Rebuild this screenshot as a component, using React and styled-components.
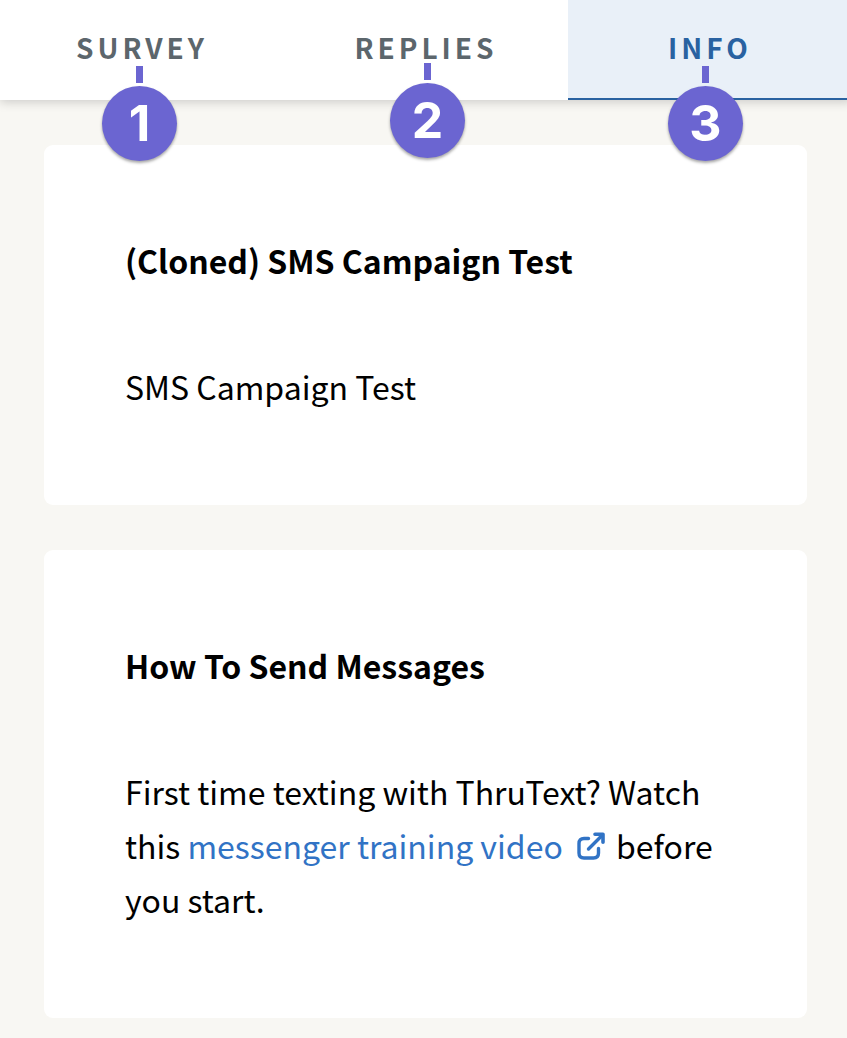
import React from "react";
import styled, { createGlobalStyle } from "styled-components";

const GlobalStyle = createGlobalStyle`
  *, *::before, *::after { box-sizing: border-box; }
  html, body { margin: 0; min-height: 100%; background: #f8f7f3; }
  body {
    overflow-x: hidden;
    color: #000;
    font-family: "Source Sans Pro", "Noto Sans CJK JP", "Noto Sans", sans-serif;
    font-size: 32px;
    line-height: 54px;
  }
`;

const Shell = styled.div`
  width: calc(100% + 5px);
`;

const TabBar = styled.nav`
  display: flex;
  height: 100px;
  background: #fff;
  box-shadow: 0 2px 10px rgba(0, 0, 0, 0.18);
`;

const TabItem = styled.div`
  position: relative;
  flex: 1;
  display: flex;
`;

const Tab = styled.button`
  flex: 1;
  margin: 0;
  padding: 0 0 4px;
  border: 0;
  border-bottom: 2px solid ${(p) => (p.$active ? "#2962a1" : "transparent")};
  background: ${(p) => (p.$active ? "#e9f0f8" : "#fff")};
  color: ${(p) => (p.$active ? "#2962a1" : "#5c666c")};
  font-family: inherit;
  font-size: 28px;
  font-weight: 700;
  line-height: 40px;
  letter-spacing: 4px;
  text-transform: uppercase;
  cursor: pointer;
`;

const Marker = styled.span`
  position: absolute;
  z-index: 2;
  top: ${(p) => p.$top}px;
  left: ${(p) => p.$left}px;
  display: flex;
  flex-direction: column;
  align-items: center;
  gap: 3px;
  pointer-events: none;
`;

const Stem = styled.span`
  width: 7px;
  height: 17px;
  background: #6b65d1;
`;

const Disc = styled.span`
  display: flex;
  align-items: center;
  justify-content: center;
  width: 75px;
  height: 75px;
  border-radius: 50%;
  background: #6b65d1;
  box-shadow: 0 2px 3px rgba(0, 0, 0, 0.35);
  color: #fff;
  font-family: Inter, "Liberation Sans", sans-serif;
  font-size: 50px;
  font-weight: 700;
  line-height: 75px;
`;

const Main = styled.main`
  display: flex;
  flex-direction: column;
  gap: 45px;
  padding: 45px 45px 20px 44px;
`;

const Card = styled.section`
  padding: 88px 81px 92px;
  border-radius: 9px;
  background: #fff;
`;

const Title = styled.h2`
  margin: 0 0 72px;
  font-size: 32px;
  font-weight: 700;
  line-height: 54px;
`;

const Copy = styled.p`
  margin: 0;
`;

const Link = styled.a`
  color: #3173c5;
  text-decoration: none;
`;

const LinkIcon = styled.svg`
  width: 28px;
  height: 28px;
  margin: 0 4px 0 14px;
  vertical-align: -1px;
`;

function ExternalIcon() {
  return (
    <LinkIcon
      viewBox="0 0 28 28"
      fill="none"
      stroke="currentColor"
      strokeWidth="3.4"
      strokeLinecap="round"
      strokeLinejoin="round"
      aria-hidden="true"
    >
      <path d="M11.500 6.500H7Q2 6.500 2 11.500V21Q2 26 7 26H16.500Q21.500 26 21.500 21V16.500" />
      <path d="M11.500 17L25 3.500" />
      <path d="M18 2.300H26V10.300" strokeWidth="3.600" />
    </LinkIcon>
  );
}

const tabs = [
  { label: "Survey", number: 1, top: 66, left: 102 },
  { label: "Replies", number: 2, top: 63, left: 106 },
  { label: "Info", number: 3, top: 66, left: 100, active: true },
];

export default function App() {
  return (
    <Shell>
      <GlobalStyle />
      <TabBar>
        {tabs.map((t) => (
          <TabItem key={t.label}>
            <Tab type="button" $active={t.active}>{t.label}</Tab>
            <Marker $top={t.top} $left={t.left}>
              <Stem />
              <Disc>{t.number}</Disc>
            </Marker>
          </TabItem>
        ))}
      </TabBar>
      <Main>
        <Card>
          <Title>(Cloned) SMS Campaign Test</Title>
          <Copy>SMS Campaign Test</Copy>
        </Card>
        <Card>
          <Title>How To Send Messages</Title>
          <Copy>
            First time texting with ThruText? Watch this{" "}
            <Link href="#training">messenger training video<ExternalIcon /></Link>{" "}
            before you start.
          </Copy>
        </Card>
      </Main>
    </Shell>
  );
}
